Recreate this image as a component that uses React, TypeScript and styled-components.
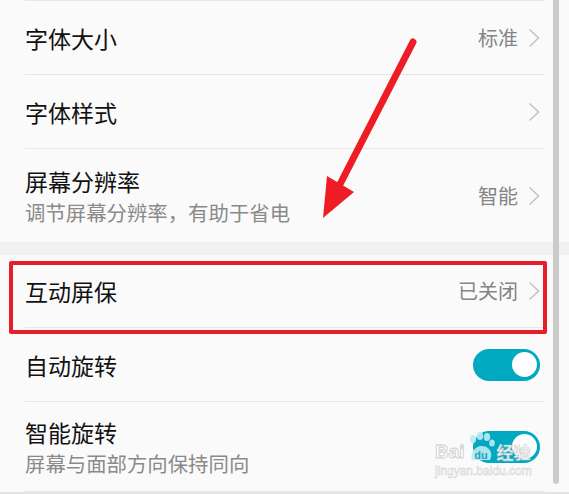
import styled, {createGlobalStyle} from "styled-components";

const GlobalStyle = createGlobalStyle`
  html, body {
    margin: 0;
    padding: 0;
    background: #fafafa;
  }
`;

type Item = {
    title: string;
    subtitle?: string;
    value?: string;
    toggle?: boolean;
    height: number;
};

const topGroup: Item[] = [
    {title: "字体大小", value: "标准", height: 73},
    {title: "字体样式", value: "", height: 73},
    {title: "屏幕分辨率", subtitle: "调节屏幕分辨率，有助于省电", value: "智能", height: 93},
];

const bottomGroup: Item[] = [
    {title: "互动屏保", value: "已关闭", height: 72},
    {title: "自动旋转", toggle: true, height: 73},
    {title: "智能旋转", subtitle: "屏幕与面部方向保持同向", toggle: true, height: 89},
];

function Chevron() {
    return (
        <svg width="12" height="20" viewBox="0 0 12 20">
            <polyline points="1.5,1.5 10.5,10 1.5,18.5" fill="none" stroke="#c4c4c4" strokeWidth="1.6"/>
        </svg>
    );
}

function SettingRow({item, last}: { item: Item, last: boolean }) {
    return (
        <Row>
            <RowInner $height={item.height} $last={last}>
                <Texts>
                    <Title>{item.title}</Title>
                    {item.subtitle && <Subtitle>{item.subtitle}</Subtitle>}
                </Texts>
                {item.toggle ? (
                    <Toggle><Knob/></Toggle>
                ) : (
                    <Trail>
                        {item.value && <Value>{item.value}</Value>}
                        <Chevron/>
                    </Trail>
                )}
            </RowInner>
        </Row>
    );
}

function App() {
    return (
        <Screen>
            <GlobalStyle/>
            <TopLine/>
            <Group>
                {topGroup.map((item, i) => (
                    <SettingRow key={item.title} item={item} last={i === topGroup.length - 1}/>
                ))}
            </Group>
            <Band/>
            <Group>
                {bottomGroup.map((item) => (
                    <SettingRow key={item.title} item={item} last={false}/>
                ))}
            </Group>
            <BottomStrip/>

            <Highlight/>
            <Arrow width="569" height="494" viewBox="0 0 569 494">
                <line x1="413" y1="42" x2="336" y2="192" stroke="#ee1d25" strokeWidth="7" strokeLinecap="round"/>
                <polygon points="323,218 327,176 354,192" fill="#ee1d25"/>
            </Arrow>
            <Scrollbar/>
            <Watermark>
                <BrandLine>
                    <Bai>Bai</Bai>
                    <Paw width="28" height="30" viewBox="0 0 28 30">
                        <ellipse cx="6" cy="7" rx="3.2" ry="4" fill="#bfeaf2"/>
                        <ellipse cx="13" cy="4" rx="3.2" ry="4" fill="#bfeaf2"/>
                        <ellipse cx="20" cy="5" rx="3.2" ry="4" fill="#bfeaf2"/>
                        <ellipse cx="25" cy="11" rx="2.8" ry="3.6" fill="#bfeaf2"/>
                        <path d="M5 28 C2 20 10 13 15 14 C21 14 27 20 23 28 Z" fill="#bfeaf2"/>
                        <text x="14" y="27" fontSize="11" fontFamily="Liberation Sans, sans-serif" fontWeight="700"
                              textAnchor="middle" fill="#1aa6be">du</text>
                    </Paw>
                    <Jingyan>经验</Jingyan>
                </BrandLine>
                <Domain>jingyan.baidu.com</Domain>
            </Watermark>
        </Screen>
    );
}

export default App;

const Screen = styled.div`
  position: relative;
  width: 569px;
  height: 494px;
  overflow: hidden;
  background: #fafafa;
  font-family: "Noto Sans CJK SC", "Noto Sans", sans-serif;
`;

const TopLine = styled.div`
  height: 1px;
  margin: 0 24px 0 25px;
  background: #e8e8e8;
`;

const Group = styled.div`
  display: flex;
  flex-direction: column;
`;

const Band = styled.div`
  height: 13px;
  background: #f1f1f1;
`;

const Row = styled.div`
  padding-left: 25px;
  padding-right: 24px;
`;

type InnerProps = {
    $height: number;
    $last: boolean;
};

const RowInner = styled.div<InnerProps>`
  display: flex;
  align-items: center;
  justify-content: space-between;
  height: ${({$height}) => $height}px;
  padding-right: 5px;
  border-bottom: ${({$last}) => ($last ? "none" : "1px solid #e6e6e6")};
`;

const Texts = styled.div`
  display: flex;
  flex-direction: column;
  gap: 2px;
`;

const Title = styled.div`
  font-size: 23px;
  line-height: 30px;
  color: #111111;
`;

const Subtitle = styled.div`
  font-size: 20.4px;
  line-height: 28px;
  color: #8a8a8a;
`;

const Trail = styled.div`
  display: flex;
  align-items: center;
  gap: 10px;
`;

const Value = styled.span`
  font-size: 20px;
  line-height: 28px;
  color: #858585;
`;

const Toggle = styled.div`
  display: flex;
  align-items: center;
  justify-content: flex-end;
  box-sizing: border-box;
  width: 67px;
  height: 32px;
  padding-right: 3px;
  border-radius: 16px;
  background: #00a9c1;
`;

const Knob = styled.div`
  width: 25px;
  height: 25px;
  border-radius: 50%;
  background: #ffffff;
`;

const BottomStrip = styled.div`
  height: 3px;
  background: #e4e4e4;
`;

const Highlight = styled.div`
  position: absolute;
  left: 9px;
  top: 261px;
  width: 538px;
  height: 73px;
  box-sizing: border-box;
  border: 4px solid #e81d2a;
  border-radius: 2px;
`;

const Arrow = styled.svg`
  position: absolute;
  left: 0;
  top: 0;
  pointer-events: none;
`;

const Scrollbar = styled.div`
  position: absolute;
  left: 553px;
  top: 0;
  width: 6px;
  height: 484px;
  border-radius: 0 0 3px 3px;
  background: #cbcbcb;
`;

const Watermark = styled.div`
  position: absolute;
  left: 435px;
  top: 432px;
  display: flex;
  flex-direction: column;
  align-items: flex-start;
  opacity: 0.9;
`;

const BrandLine = styled.div`
  display: flex;
  align-items: flex-end;
`;

const Bai = styled.span`
  font-family: "Liberation Sans", Arial, sans-serif;
  font-weight: 700;
  font-size: 19px;
  line-height: 20px;
  color: #ffffff;
  -webkit-text-stroke: 0.8px #c8c8c8;
`;

const Paw = styled.svg`
  margin: 0 2px 0 2px;
`;

const Jingyan = styled.span`
  font-size: 17px;
  line-height: 20px;
  font-weight: 700;
  color: #ffffff;
  -webkit-text-stroke: 0.6px #c4c4c4;
`;

const Domain = styled.span`
  margin-top: 3px;
  font-family: "Liberation Sans", Arial, sans-serif;
  font-size: 12px;
  line-height: 13px;
  color: #ffffff;
  -webkit-text-stroke: 0.5px #cccccc;
`;
